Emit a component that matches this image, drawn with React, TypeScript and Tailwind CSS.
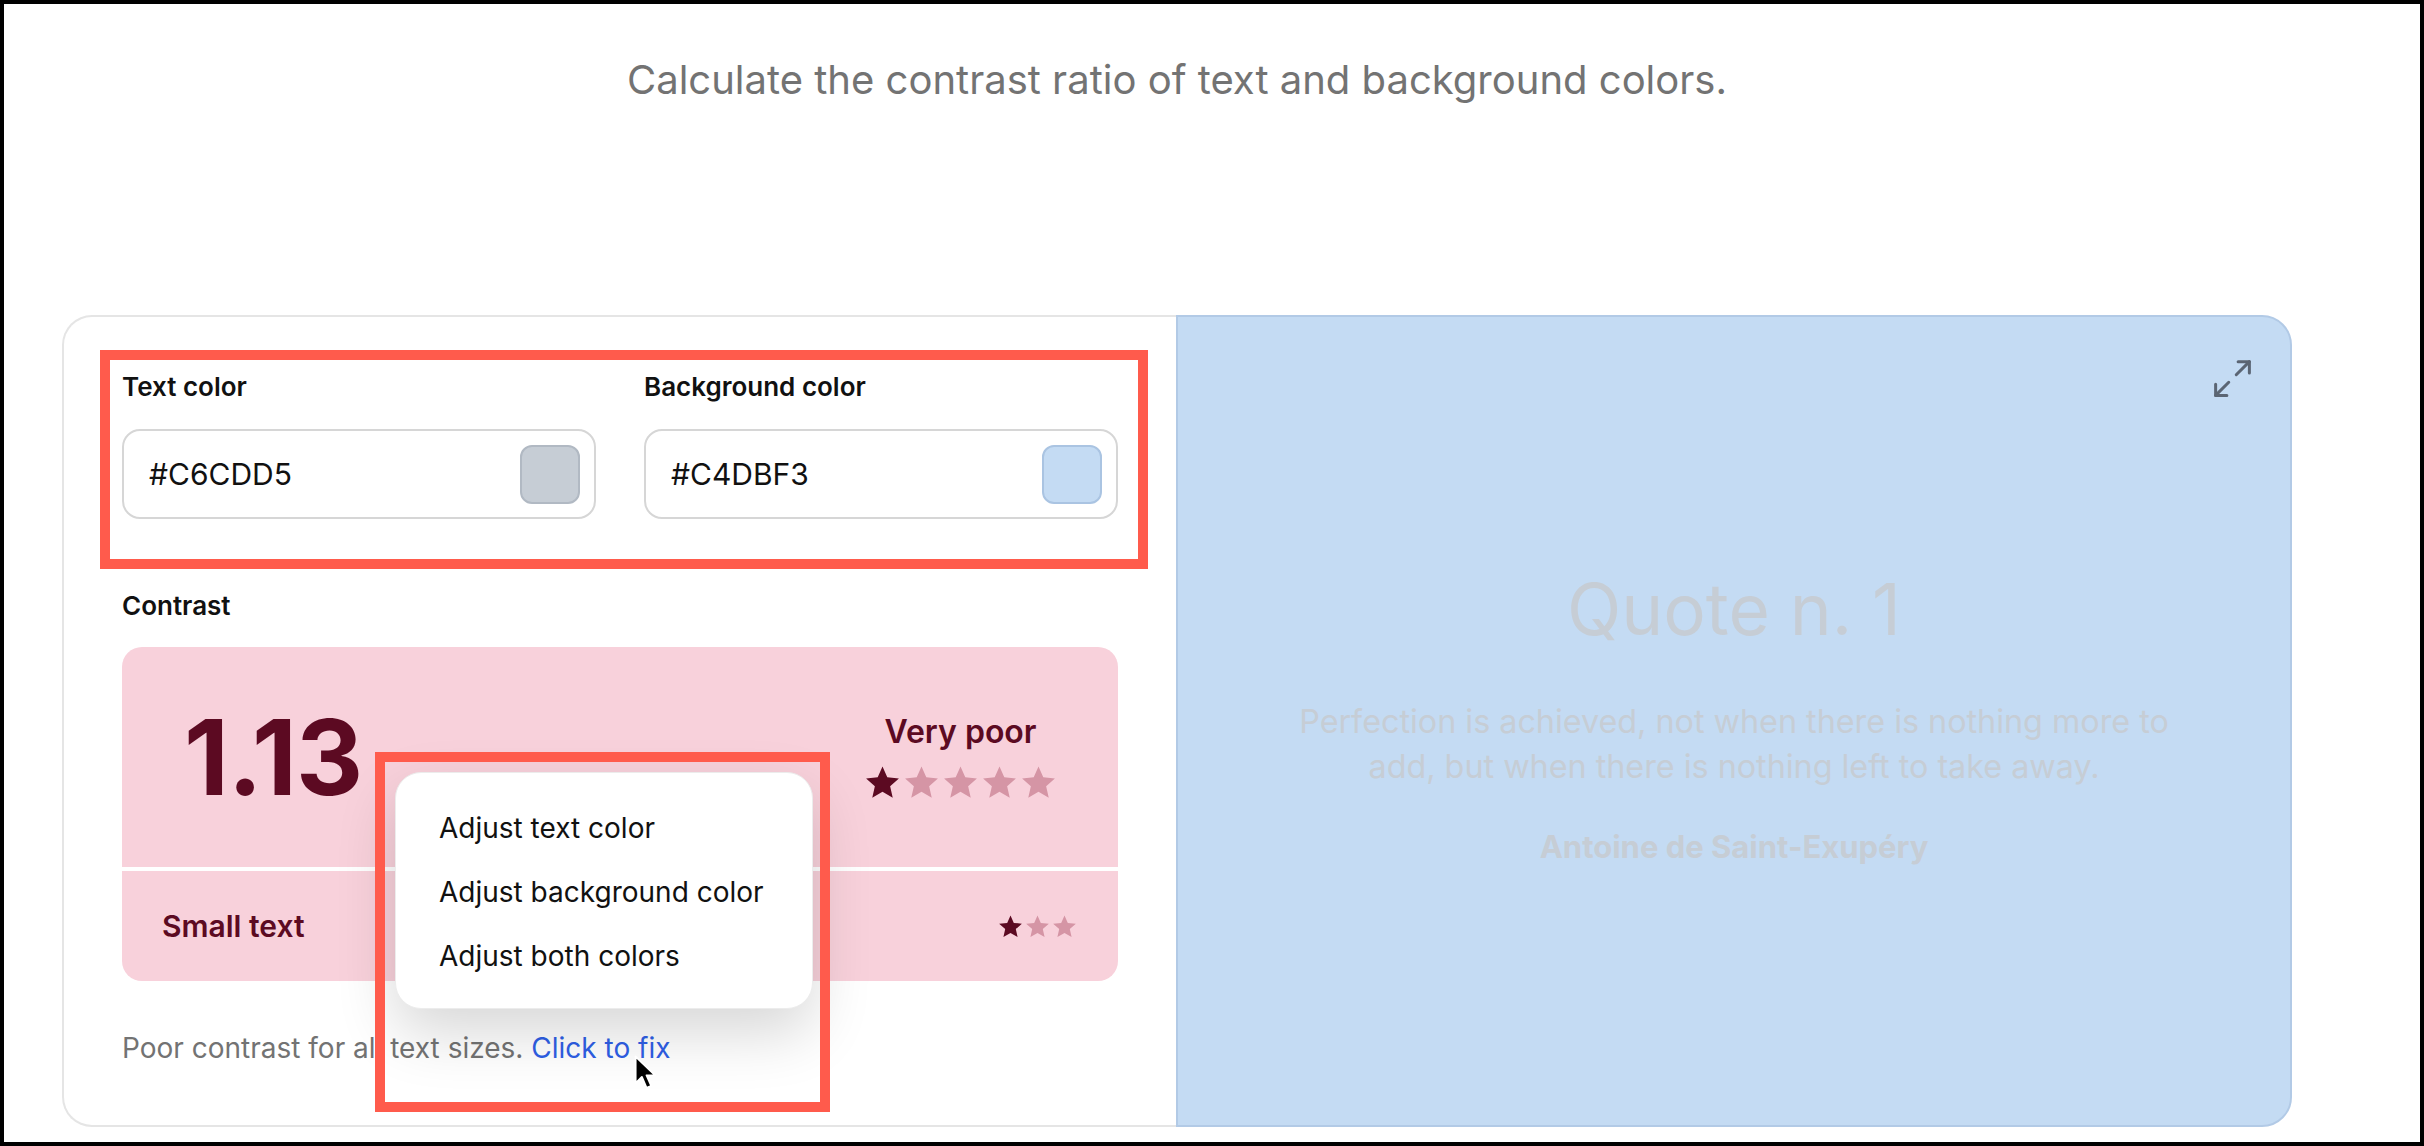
import { Maximize2 } from "lucide-react";

// Filled five-point star used by the rating rows.
function Star({ size, className }: { size: number; className: string }) {
  return (
    <svg width={size} height={size} viewBox="0 0 24 24" className={className}>
      <path
        fill="currentColor"
        d="M12 2.2l2.95 6.6 7.15.7-5.4 4.8 1.6 7.1L12 17.7l-6.3 3.7 1.6-7.1-5.4-4.8 7.15-.7z"
      />
    </svg>
  );
}

function Rating({ total, filled, size }: { total: number; filled: number; size: number }) {
  return (
    <div className="flex items-center">
      {Array.from({ length: total }).map((_, i) => (
        <Star key={i} size={size} className={i < filled ? "text-[#5c0a22]" : "text-[#d595a5]"} />
      ))}
    </div>
  );
}

function ColorField({ label, value, swatch }: { label: string; value: string; swatch: string }) {
  return (
    <div>
      <div className="text-[26px] leading-[32px] font-semibold text-[#111]">{label}</div>
      <div className="mt-[26px] flex h-[90px] items-center justify-between rounded-[18px] border-2 border-[#d6d6d6] pl-[25px] pr-[14px]">
        <span className="text-[30px] text-[#111]">{value}</span>
        <span className={`h-[59px] w-[60px] rounded-[12px] border-2 ${swatch}`} />
      </div>
    </div>
  );
}

export default function App() {
  return (
    <div className="relative h-[1146px] w-[2424px] overflow-hidden border-4 border-black bg-white font-['Inter',sans-serif]">
      <div className="ml-[58px] w-[2230px] pt-[52px]">
        <h1 className="text-center text-[40px] leading-[48px] text-[#737373]">
          Calculate the contrast ratio of text and background colors.
        </h1>

        <div className="mt-[211px] grid h-[812px] grid-cols-[1114px_1116px]">
          {/* controls */}
          <div className="rounded-l-[30px] border-2 border-r-0 border-[#e5e5e5] pl-[58px] pt-[54px]">
            <div className="grid w-[996px] grid-cols-2 gap-[48px]">
              <ColorField label="Text color" value="#C6CDD5" swatch="bg-[#c6cdd5] border-[#b1b9c3]" />
              <ColorField label="Background color" value="#C4DBF3" swatch="bg-[#c4dbf3] border-[#aac4e2]" />
            </div>

            <div className="mt-[71px] text-[26px] leading-[32px] font-semibold text-[#111]">Contrast</div>
            <div className="mt-[25px] w-[996px] overflow-hidden rounded-[20px] bg-[#f8d1db]">
              <div className="flex h-[220px] items-center justify-between pl-[62px] pr-[60px]">
                <span className="text-[104px] leading-none font-bold tracking-[-0.01em] text-[#5c0a22]">1.13</span>
                <div className="flex flex-col items-center">
                  <span className="text-[32px] leading-[38px] font-semibold text-[#5c0a22]">Very poor</span>
                  <div className="mt-[12px]">
                    <Rating total={5} filled={1} size={39} />
                  </div>
                </div>
              </div>
              <div className="h-[4px] bg-white" />
              <div className="flex h-[110px] items-center justify-between px-[40px]">
                <span className="text-[30px] font-semibold text-[#5c0a22]">Small text</span>
                <Rating total={3} filled={1} size={27} />
              </div>
            </div>

            <p className="mt-[49px] text-[28px] leading-[36px] text-[#737373]">
              Poor contrast for all text sizes. <span className="text-[#2f5fe6]">Click to fix</span>
            </p>
          </div>

          {/* preview */}
          <div className="relative flex flex-col items-center justify-center rounded-r-[30px] border-2 border-[#b2cae6] bg-[#c4dbf3] pb-[10px] text-[#c6cdd5]">
            <Maximize2 size={45} strokeWidth={1.6} className="absolute right-[35px] top-[39px] text-[#5b6573]" />
            <div className="text-[71px] leading-[84px]">Quote n. 1</div>
            <p className="mt-[48px] max-w-[900px] text-center text-[32.3px] leading-[45px]">
              Perfection is achieved, not when there is nothing more to add, but when there is nothing left to take away.
            </p>
            <div className="mt-[40px] text-[31px] leading-[36px] font-bold">Antoine de Saint-Exupéry</div>
          </div>
        </div>
      </div>

      {/* fix menu */}
      <div className="absolute left-[391px] top-[768px] h-[237px] w-[418px] rounded-[26px] border border-[#ececec] bg-white pl-[43px] pt-[23px] shadow-[0_24px_60px_rgba(0,0,0,0.16)]">
        {["Adjust text color", "Adjust background color", "Adjust both colors"].map((t) => (
          <div key={t} className="text-[28px] leading-[64px] text-[#111]">
            {t}
          </div>
        ))}
      </div>

      {/* pointer */}
      <svg width="22" height="36" viewBox="0 0 14 23" className="absolute left-[630px] top-[1051px]">
        <path d="M1 1v17l4-4 3 7 3-1.3-3-6.7h5.5z" fill="#000" stroke="#fff" strokeWidth="1.2" strokeLinejoin="round" />
      </svg>

      {/* annotation boxes */}
      <div className="absolute left-[96px] top-[346px] h-[219px] w-[1048px] border-[10px] border-[#ff5b4c]" />
      <div className="absolute left-[371px] top-[748px] h-[360px] w-[455px] border-[10px] border-[#ff5b4c]" />
    </div>
  );
}
